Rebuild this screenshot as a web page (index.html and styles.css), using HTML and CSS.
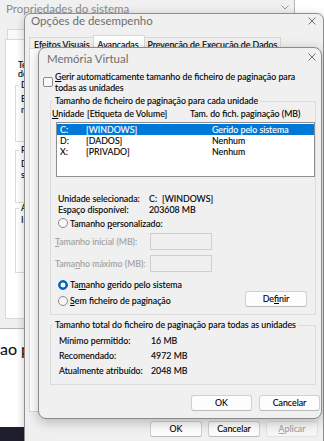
FILE: index.html
```html
<!DOCTYPE html>
<html lang="pt">
<head>
<meta charset="utf-8">
<title>Memória Virtual</title>
<link rel="stylesheet" href="styles.css">
</head>
<body>
<div class="bgwin"><span class="bgtext">ao p</span></div>
<div class="taskbar"></div>

<section class="win win1">
  <header class="titlebar t1">
    <span class="title">Propriedades do sistema</span>
    <svg class="chev" width="8" height="5" viewBox="0 0 8 5"><polyline points="0.5,0.5 4,4 7.5,0.5" fill="none" stroke="#8a8a8a" stroke-width="0.9"/></svg>
  </header>
  <div class="tabs1"><span class="tab1"></span></div>
  <div class="page1">
    <p class="note">Tem de<br>destas</p>
    <div class="grp1 ga">
      <div class="lg1">Desempenho</div>
      <p class="gt1">Efeitos<br>memória</p>
    </div>
    <div class="grp1 gb">
      <div class="lg1">Perfis</div>
      <p class="gt1">Definições<br>seu início</p>
    </div>
    <div class="grp1 gc">
      <div class="lg1">Arranque</div>
      <p class="gt1">Informações</p>
    </div>
  </div>
</section>

<section class="win win2">
  <header class="titlebar t2">
    <span class="title">Opções de desempenho</span>
    <svg class="close" width="8" height="8" viewBox="0 0 8 8"><path d="M0.5 0.5 L7.5 7.5 M7.5 0.5 L0.5 7.5" stroke="#5f5f5f" stroke-width="0.9"/></svg>
  </header>
  <div class="tabs2">
    <span class="tab2">Efeitos Visuais</span>
    <span class="tab2 on">Avançadas</span>
    <span class="tab2">Prevenção de Execução de Dados</span>
  </div>
  <div class="page2"></div>
  <div class="actions2">
    <button class="btn w52">OK</button>
    <button class="btn w52">Cancelar</button>
    <button class="btn w52 off"><u>A</u>plicar</button>
  </div>
</section>

<section class="win win3">
  <header class="titlebar t3">
    <span class="title">Memória Virtual</span>
    <svg class="close" width="8" height="8" viewBox="0 0 8 8"><path d="M0.5 0.5 L7.5 7.5 M7.5 0.5 L0.5 7.5" stroke="#5f5f5f" stroke-width="0.9"/></svg>
  </header>
  <div class="body3">
    <div class="check">
      <span class="cbox"></span>
      <span class="ctext"><u>G</u>erir automaticamente tamanho de ficheiro de paginação para<br>todas as unidades</span>
    </div>

    <div class="group g-drives">
      <div class="legend">Tamanho de ficheiro de paginação para cada unidade</div>
      <div class="cols">
        <span class="c1"><u>U</u>nidade</span>
        <span class="c2">[Etiqueta de Volume]</span>
        <span class="c3">Tam. do fich. paginação (MB)</span>
      </div>
      <ul class="list">
        <li class="row sel"><span class="r1">C:</span><span class="r2">[WINDOWS]</span><span>Gerido pelo sistema</span></li>
        <li class="row"><span class="r1">D:</span><span class="r2">[DADOS]</span><span>Nenhum</span></li>
        <li class="row"><span class="r1">X:</span><span class="r2">[PRIVADO]</span><span>Nenhum</span></li>
      </ul>
      <div class="info">
        <div class="kv"><span class="k">Unidade selecionada:</span><span class="drv">C:</span><span>[WINDOWS]</span></div>
        <div class="kv"><span class="k">Espaço disponível:</span><span>203608 MB</span></div>
      </div>
      <div class="radio r-custom"><span class="rdot"></span><span>Tamanho <u>p</u>ersonalizado:</span></div>
      <div class="field f1"><span class="flabel"><u>T</u>amanho inicial (MB):</span><span class="input"></span></div>
      <div class="field f2"><span class="flabel">Tama<u>n</u>ho máximo (MB):</span><span class="input"></span></div>
      <div class="radio r-sys"><span class="rdot on"></span><span>Ta<u>m</u>anho gerido pelo sistema</span></div>
      <div class="lastrow">
        <div class="radio r-none"><span class="rdot"></span><span><u>S</u>em ficheiro de paginação</span></div>
        <button class="btn define">De<u>f</u>inir</button>
      </div>
    </div>

    <div class="group g-total">
      <div class="legend">Tamanho total do ficheiro de paginação para todas as unidades</div>
      <div class="tot"><span class="k2">Mínimo permitido:</span><span>16 MB</span></div>
      <div class="tot"><span class="k2">Recomendado:</span><span>4972 MB</span></div>
      <div class="tot"><span class="k2">Atualmente atribuído:</span><span>2048 MB</span></div>
    </div>

    <div class="actions3">
      <button class="btn w61">OK</button>
      <button class="btn w61">Cancelar</button>
    </div>
  </div>
</section>
</body>
</html>
```

FILE: styles.css
```css
* { box-sizing: border-box; }
html, body { margin: 0; padding: 0; }
body {
  width: 324px;
  height: 441px;
  overflow: hidden;
  position: relative;
  background: #ffffff;
  font-family: Lato, "Noto Sans", sans-serif;
  font-size: 8.8px;
  color: #000;
  -webkit-text-stroke: 0.12px currentColor;
}
p { margin: 0; }
ul { margin: 0; padding: 0; list-style: none; }
u { text-decoration-thickness: 1px; text-underline-offset: 1px; }

/* background desktop bits */
.bgwin {
  position: absolute;
  left: 0;
  top: 328px;
  width: 24px;
  height: 99px;
  background: #fff;
  padding-top: 11px;
}
.bgtext { font-size: 16px; line-height: 20px; color: #111; white-space: nowrap; }
.taskbar {
  position: absolute;
  left: 0;
  bottom: 0;
  width: 40px;
  height: 14px;
  background: #1e1f2c;
}

/* windows */
.win {
  position: absolute;
  background: #f0f0f0;
  border: 1px solid #9a9a9a;
}
.titlebar { display: flex; align-items: flex-start; }
.title { line-height: 13px; color: #6e6e6e; font-size: 11.5px; white-space: nowrap; -webkit-text-stroke: 0; }
.close { margin-left: auto; flex: none; }

/* window 1 (behind) */
.win1 {
  left: -2px;
  top: -1px;
  width: 297px;
  height: 330px;
  border-color: #b5b5b5;
  padding: 0 4px 0 6px;
}
.t1 { height: 29px; padding-top: 3.5px; padding-left: 1px; }
.t1 .title { color: #8c8c8c; line-height: 10px; }
.chev { margin-left: auto; margin-right: 1px; margin-top: 1.5px; }
.tabs1 { display: flex; height: 10px; padding-left: 2px; }
.tab1 {
  width: 40px;
  border: 1px solid #d9d9d9;
  border-bottom: none;
  background: #f9f9f9;
}
.page1 {
  width: 33px;
  height: 280px;
  background: #fff;
  border: 1px solid #d9d9d9;
  padding: 20px 0 0 9px;
}
.note { margin-left: 3px; line-height: 9px; white-space: nowrap; }
.grp1 { border: 1px solid #dcdcdc; border-right: none; padding: 0 0 0 5px; }
.ga { margin-top: 7px; height: 57px; }
.gb { margin-top: 8px; height: 53px; }
.gc { margin-top: 5px; height: 65px; }
.lg1 {
  width: fit-content;
  margin: -6px 0 0 -2px;
  padding: 0 2px;
  background: #fff;
  line-height: 10px;
  white-space: nowrap;
}
.gt1 { line-height: 10.5px; white-space: nowrap; }
.ga .gt1 { margin-top: 4px; }
.gb .gt1 { margin-top: 4px; }
.gc .gt1 { margin-top: 2px; }

/* window 2 (Opções de desempenho) */
.win2 {
  left: 24px;
  top: 13px;
  width: 300px;
  height: 440px;
  border-radius: 7px 7px 0 0;
  border-color: #8e8e8e;
  box-shadow: 0 2px 10px rgba(0, 0, 0, 0.22);
  padding: 0 5px 0 4px;
}
.t2 { height: 21px; padding-left: 2px; }
.t2 .close { margin-top: 3px; margin-right: 2px; }
.tabs2 { display: flex; align-items: flex-end; height: 13px; }
.tab2 {
  height: 11px;
  line-height: 10px;
  padding: 1.5px 3px 0 4px;
  border: 1px solid #d9d9d9;
  border-bottom: none;
  white-space: nowrap;
}
.tab2 + .tab2 { border-left: none; }
.tab2.on {
  height: 13px;
  background: #fff;
  padding: 3.5px 5px 0 4px;
  margin: 0 -1px;
  border-left: 1px solid #d9d9d9;
  position: relative;
}
.page2 {
  height: 364px;
  background: #fff;
  border: 1px solid #d9d9d9;
}
.actions2 {
  display: flex;
  justify-content: flex-end;
  gap: 6px;
  margin-top: 9px;
}

/* buttons */
.btn {
  font: inherit;
  height: 16px;
  padding: 0;
  line-height: 14px;
  background: #fdfdfd;
  border: 1px solid #d0d0d0;
  border-bottom-color: #b9b9b9;
  border-radius: 3px;
  color: #000;
}
.btn.off { background: #f6f6f6; border-color: #e2e2e2; color: #a3a3a3; }
.w52 { width: 52px; }
.w61 { width: 61px; }

/* window 3 (Memória Virtual) */
.win3 {
  left: 38px;
  top: 47px;
  width: 284px;
  height: 372px;
  border-radius: 8px;
  border-color: #8a8a8a;
  box-shadow: 0 3px 12px rgba(0, 0, 0, 0.25);
}
.t3 { height: 22px; padding: 4px 0 0 8px; }
.t3 .close { margin-top: 1px; margin-right: 5px; }
.body3 { padding: 2px 0 0 4px; }

.check { display: flex; align-items: flex-start; line-height: 10.5px; }
.cbox {
  flex: none;
  width: 10px;
  height: 10px;
  margin-top: 5px;
  margin-right: 2px;
  border: 1px solid #8a8a8a;
  border-radius: 2px;
  background: #f9f9f9;
}
.ctext { white-space: nowrap; }

.group {
  margin-left: 7px;
  width: 266px;
  border: 1px solid #dcdcdc;
}
.g-drives { margin-top: 8px; padding-bottom: 7px; }
.g-total { margin-top: 10px; padding-bottom: 8px; }
.legend {
  width: fit-content;
  margin: -6px 0 0 2px;
  padding: 0 2px;
  background: #f0f0f0;
  line-height: 10px;
  white-space: nowrap;
}

.cols { display: flex; margin-top: 2px; padding-left: 1px; line-height: 11px; white-space: nowrap; }
.c1 { width: 35px; }
.c2 { width: 103px; }

.list {
  margin: 3px 0 0 5px;
  width: 259px;
  height: 55px;
  border: 1px solid #8c8f94;
  background: #fff;
  padding-top: 1px;
}
.row { display: flex; height: 11px; line-height: 11px; padding-left: 3px; white-space: nowrap; }
.row.sel { background: #0078d7; color: #fff; }
.r1 { width: 26px; }
.r2 { width: 126px; }

.info { margin-top: 15.5px; padding-left: 7px; }
.kv { display: flex; line-height: 11px; white-space: nowrap; }
.k { width: 91px; }
.drv { width: 13px; }

.radio { display: flex; align-items: center; height: 11px; line-height: 11px; white-space: nowrap; }
.rdot {
  flex: none;
  width: 10px;
  height: 10px;
  margin-right: 2px;
  border: 1px solid #8a8a8a;
  border-radius: 50%;
  background: #f7f7f7;
}
.rdot.on {
  border-color: #0067c0;
  background: radial-gradient(circle, #fff 0 2.2px, #0067c0 2.7px);
}
.r-custom { margin-top: 3px; padding-left: 7px; }
.r-sys { margin-top: 7px; padding-left: 7px; }

.field { display: flex; align-items: center; height: 17px; padding-left: 4px; color: #a0a0a0; white-space: nowrap; }
.f1 { margin-top: 4.5px; }
.f2 { margin-top: 5px; }
.flabel { width: 95px; }
.input { width: 62px; height: 17px; border: 1px solid #cfcfcf; background: #f0f0f0; }

.lastrow { display: flex; align-items: flex-start; margin-top: 1px; padding-left: 7px; }
.r-none { margin-top: 4px; }
.define { width: 62px; margin-left: auto; margin-right: 8px; }

.tot { display: flex; line-height: 11px; padding-left: 8px; white-space: nowrap; }
.legend + .tot { margin-top: 5px; }
.tot + .tot { margin-top: 4px; }
.k2 { width: 92px; }

.actions3 { display: flex; justify-content: flex-end; gap: 7px; margin-top: 10px; padding-right: 1px; }
```
